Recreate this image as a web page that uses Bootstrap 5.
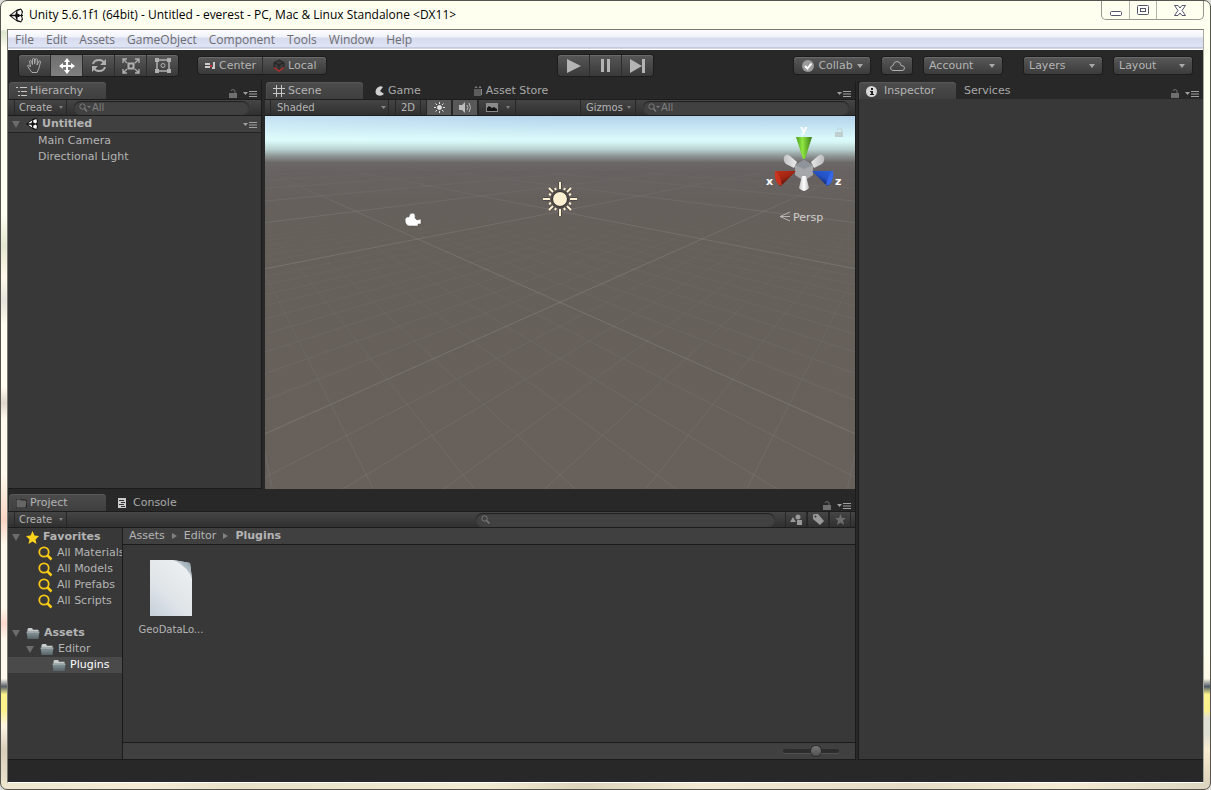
<!DOCTYPE html>
<html lang="en">
<head>
<meta charset="utf-8">
<meta name="viewport" content="width=device-width, initial-scale=1">
<title>Unity 5.6.1f1 (64bit) - Untitled - everest</title>
<link href="https://cdn.jsdelivr.net/npm/bootstrap@5.3.0/dist/css/bootstrap.min.css" rel="stylesheet">
<style>
  body { font: 11px/16px "DejaVu Sans", Verdana, sans-serif; color: #b4b4b4; background: #dcdcd8; }
  svg { display: block; flex: none; }
  button, input, select { font: inherit; color: inherit; }
  button { border: 0; background: none; padding: 0; }
  .shrinkable { min-width: 0; min-height: 0; }
  .frame {
    border: 1px solid #55554f; border-radius: 7px; padding: 0 6px 6px;
    background:
      linear-gradient(#fffff0, #fffff0) 0 0 / 100% 29px no-repeat,
      linear-gradient(90deg, #ede5cd, #f5ebd5 12%, #e9e0c8 20%, #f3ead2 40%, #ddd3bb 48%, #f3e9d2 58%, #e6dcc5 75%, #f5ebd3 88%, #ddd5c0) 0 100% / 100% 8px no-repeat,
      linear-gradient(#fffff0 0 3%, #dbe6cd 4%, #fffff0 6% 27%, #e4e8d0 31%, #fffaeb 35%, #e6e4dc 38%, #fffdee 41% 49%, #e0d7ca 51%, #fffaec 53% 60%, #fbd5c5 66%, #fffaec 69% 77%, #fdd9ce 79%, #fffaee 81% 86%, #565d68 87%, #fdf28c 88% 90%, #fff5e4 92%, #d8ceba 95%, #ede5d0) 0 0 / 7px 100% no-repeat,
      linear-gradient(#fffff0 0 82%, #fff8e6 86%, #4d5866 87%, #fdf28c 88% 90%, #dfdfd5 91% 93%, #f9ecd3 95%, #d9cfb7) 100% 0 / 8px 100% no-repeat,
      #fffff0;
  }
  .title-strip { height: 28px; color: #000; font: 12px/28px "Open Sans", sans-serif; padding-left: 2px; gap: 6px; }
  .title-strip h1 { font: inherit; }
  .win-buttons { height: 19px; border: 1px solid #96968e; border-top: 0; border-radius: 0 0 5px 5px; }
  .win-buttons button { display: grid; place-items: center; width: 27px; }
  .win-buttons button + button { border-left: 1px solid #b4b4aa; }
  .win-buttons button:last-child { width: 47px; }
  .client { border: 1px solid #77776f; border-right-color: #a9a9a0; border-bottom-color: #fff; background: #282828; }
  .menu-strip { height: 20px; background: linear-gradient(#fff, #f0f2fa 7px, #d6dbee 8px, #dfe4f5 17px, #a8b0c8 18px, #fff 19px); font: 12px/20px "Open Sans", sans-serif; padding-left: 7px; gap: 12px; }
  .menu-strip a { color: #6e6e72; text-decoration: none; }

  .top-tools { display: grid; grid-template-columns: 1fr auto 1fr; align-items: center; height: 31px; padding: 0 11px; }
  .seg { background: linear-gradient(#575757, #393939); border-radius: 3px; box-shadow: 0 0 0 1px #1c1c1c, inset 0 1px #6a6a6a; overflow: hidden; }
  .seg button { display: grid; place-items: center; box-sizing: content-box; width: 31px; height: 21px; }
  .seg button + button { border-left: 1px solid #2d2d2d; }
  .seg .on { background: linear-gradient(#6f6f6f, #808080); }
  .seg.slim { margin-left: 20px; }
  .seg.slim button { display: flex; align-items: center; box-sizing: border-box; width: 64px; height: 17px; gap: 3px; padding: 0 7px; }
  .seg.slim button + button { padding-left: 10px; }
  .drop { display: flex; align-items: center; justify-content: space-between; height: 17px; width: 78px; padding: 0 7px 0 5px; border-radius: 3px; background: linear-gradient(#585858, #3c3c3c); box-shadow: 0 0 0 1px #1c1c1c, inset 0 1px #6a6a6a; }
  .drops { gap: 12px; }
  .drop.collab { width: 76px; padding-left: 8px; }
  .drop.cloud { width: 30px; padding: 0; justify-content: center; }
  .drop.apart { margin-left: 10px; }
  .caret { width: 0; height: 0; border: 3px solid transparent; border-top: 4px solid #a8a8a8; border-bottom: 0; flex: none; }
  .caret.dim { border-top-color: #808080; border-width: 3px 2px 0; }

  .tab-row { height: 18px; display: flex; align-items: flex-end; padding-left: 1px; }
  .tab-row button { display: flex; align-items: center; height: 17px; gap: 3px; padding-top: 1px; color: #a8a8a8; }
  .tab-row button.active { width: 97px; padding-left: 7px; background: linear-gradient(#4c4c4c, #3f3f3f); border-radius: 4px 4px 0 0; box-shadow: inset 0 1px #595959, inset 1px 0 #4e4e4e; color: #b4b4b4; }
  .tab-row .after { margin-left: 12px; }
  .tab-row .after-wide { margin-left: 53px; }
  .pane-ctl { display: flex; align-items: center; gap: 6px; padding-right: 4px; height: 11px; }
  .bar { height: 17px; display: flex; align-items: stretch; background: linear-gradient(#454545, #303030); border-top: 1px solid #1d1d1d; border-bottom: 1px solid #1d1d1d; font-size: 10px; line-height: 15px; }
  .bar button, .bar select { border-left: 1px solid #272727; border-right: 1px solid #272727; }
  .bar .on { background: #585858; width: 26px; }
  .bar .flat { width: 26px; margin: 0 5px 0 6px; }
  .bar .sq { width: 22px; }
  .bar .fx { width: 38px; padding-left: 7px; gap: 8px; }
  .bar .giz { width: 56px; padding: 0 4px 0 5px; }
  .mk { display: flex; align-items: center; justify-content: space-between; width: 53px; margin-left: 6px; }
  .bar .mk { padding: 0 3px 0 4px; }
  .bar .shade { width: 119px; margin-left: 5px; padding: 0 6px; background: url("data:image/svg+xml,%3Csvg xmlns='http://www.w3.org/2000/svg' width='5' height='3'%3E%3Cpath d='M0 0h5L2.500 3z' fill='%23888'/%3E%3C/svg%3E") right 2px center no-repeat; appearance: none; border-width: 0 1px; border-radius: 0; outline: 0; }
  .find { display: flex; align-items: center; gap: 1px; height: 13px; margin: 1px 0; padding-left: 5px; border-radius: 7px; background: #414141; box-shadow: inset 0 1px 1px #202020, 0 1px #404040; }
  .find input { flex: 1; min-width: 0; height: 13px; padding: 0; border: 0; outline: 0; background: none; font-size: 10px; }
  .find input::placeholder { color: #7e7e7e; opacity: 1; }
  .find.in-hier { flex: 1; margin-left: 7px; margin-right: 12px; }
  .find.in-scene { width: 206px; margin-left: 7px; margin-right: 6px; }
  .find.in-project { width: 299px; margin-right: 10px; }
  .main { min-height: 480px; }
  .upper { flex: 1; min-height: 0; }
  .hier { width: 254px; border-right: 1px solid #1b1b1b; }
  .scene-col { margin-left: 3px; border-right: 1px solid #1b1b1b; }
  .insp { width: 345px; margin-left: 2px; border-left: 1px solid #1b1b1b; }
  .insp .tab-row { padding-left: 0; }
  .fill { background: #383838; border-bottom: 1px solid #1b1b1b; flex: 1; min-height: 0; }
  .scene-col .fill { border-bottom: 0; }
  .head-row { height: 17px; background: #404040; border-bottom: 1px solid #232323; }
  .rows { list-style: none; margin: 0; padding: 0; }
  .rows li { display: flex; align-items: center; height: 16px; white-space: nowrap; }
  .rows .lv1 { padding-left: 18px; }
  .rows .lv2 { padding-left: 30px; }
  .rows .lv3 { padding-left: 44px; }
  .lower { height: 271px; padding-top: 4px; border-right: 1px solid #1b1b1b; }
  .tri { width: 0; height: 0; border: 4px solid transparent; border-top: 7px solid #6c6c6c; border-bottom: 0; margin-right: 6px; flex: none; }
  .fill.tree { flex: none; width: 115px; padding-top: 1px; border-right: 1px solid #1b1b1b; overflow: hidden; }
  .tree .picked { background: #4a4a4a; color: #fff; }
  .crumbs { height: 17px; padding-left: 6px; gap: 7px; background: #404040; border-bottom: 1px solid #1b1b1b; }
  .crumbs a { color: inherit; text-decoration: none; }
  .next { width: 0; height: 0; border: 3px solid transparent; border-left: 5px solid #808080; border-right: 0; }
  .asset { width: 66px; margin: 15px 0 0 15px; text-align: center; font-size: 10px; line-height: 16px; }
  .foot { height: 17px; background: #404040; border-top: 1px solid #1b1b1b; padding-right: 16px; }
  .foot input { appearance: none; width: 56px; height: 10px; background: none; margin: 0; }
  .foot input::-webkit-slider-runnable-track { height: 4px; background: #2c2c2c; border-radius: 2px; box-shadow: 0 1px #505050; }
  .foot input::-webkit-slider-thumb { appearance: none; width: 10px; height: 10px; margin-top: -3px; border-radius: 50%; background: linear-gradient(#777, #505050); box-shadow: 0 0 0 1px #2c2c2c; }
  .status { height: 22px; }
</style>
</head>
<body>
<svg width="0" height="0" class="position-absolute">
  <defs>
    <symbol id="unity" viewBox="0 0 14 14"><path d="M0 7 8 1 12 0 14 3 13 7 14 11 12 14 8 13Z" fill="#111"/><path d="M2.500 6.200 7.500 2.500 6.200 6.200ZM2.500 7.800H6.200L7.500 11.500ZM8.500 2.500 12 1.300 12.800 4.500 11.300 7 8.500 5.500ZM8.500 11.500V8.500L11.300 7 12.800 9.500 12 12.700Z" fill="#fff"/><path d="M8.500 5.500 11.300 7 8.500 8.500M11.300 7H14" stroke="#111" fill="none"/></symbol>
    <symbol id="lock" viewBox="0 0 8 9"><path d="M0 4h8v5H0z" fill="#6f6f6f"/><path d="M2 2V1.500Q4-.5 6 1.500V4" fill="none" stroke="#6f6f6f"/></symbol>
    <symbol id="opts" viewBox="0 0 14 7"><path d="M0 2h5L2.500 5z" fill="#a0a0a0"/><path d="M6 1.500h8M6 4h8M6 6.500h8" stroke="#a0a0a0"/></symbol>
    <symbol id="lens" viewBox="0 0 11 9"><circle cx="3.500" cy="3.500" r="2.700" fill="none" stroke="#7a7a7a"/><path d="m5.500 5.500 3 3" stroke="#7a7a7a" stroke-width="1.500"/></symbol>
    <symbol id="lensdd" viewBox="0 0 12 9"><circle cx="3.500" cy="3.500" r="2.700" fill="none" stroke="#7a7a7a"/><path d="m5.500 5.500 2.500 3" stroke="#7a7a7a" stroke-width="1.500"/><path d="M8 3h4l-2 2z" fill="#7a7a7a"/></symbol>
    <symbol id="glass" viewBox="0 0 15 15"><circle cx="6" cy="6" r="4.700" fill="none" stroke="#f8c818" stroke-width="1.800"/><path d="m9.500 9.500 4 4" stroke="#ffcf16" stroke-width="2.500"/></symbol>
    <linearGradient id="fg" x2="0" y2="1"><stop stop-color="#8d9a9d"/><stop offset="1" stop-color="#566467"/></linearGradient>
    <symbol id="dir" viewBox="0 0 14 12"><path d="M1 3V1l1-1h4l1 2h6v2H1z" fill="#c6cbcc"/><path d="M0 4h14l-1 8H1z" fill="url(#fg)"/><path d="M0 4.500h14" stroke="#a8b4b6"/></symbol>
  </defs>
</svg>

<div class="frame d-flex flex-column min-vh-100">
  <header class="title-strip d-flex align-items-center">
    <svg width="14" height="15"><use href="#unity"/></svg>
    <h1 class="m-0 flex-grow-1 text-nowrap">Unity 5.6.1f1 (64bit) - Untitled - everest - PC, Mac &amp; Linux Standalone &lt;DX11&gt;</h1>
    <div class="win-buttons d-flex align-self-start">
      <button aria-label="Minimize"><svg width="12" height="14"><rect x=".5" y="8.500" width="11" height="4" rx="1" fill="#fff" stroke="#55556a"/></svg></button>
      <button aria-label="Maximize"><svg width="12" height="10"><rect x=".5" y=".5" width="11" height="9" rx="1" fill="#fff" stroke="#55556a" /><rect x="3.500" y="3.500" width="5" height="3" fill="#fff" stroke="#55556a"/></svg></button>
      <button aria-label="Close"><svg width="12" height="11"><path d="M.5.5h3.500l2 2.500 2-2.500h3.500L8 5.500l3.500 5H8L6 8l-2 2.500H.5l3.500-5z" fill="#fff" stroke="#55556a"/></svg></button>
    </div>
  </header>

  <div class="client flex-grow-1 d-flex flex-column">
    <nav class="menu-strip d-flex">
      <a href="#">File</a><a href="#">Edit</a><a href="#">Assets</a><a href="#">GameObject</a><a href="#">Component</a><a href="#">Tools</a><a href="#">Window</a><a href="#">Help</a>
    </nav>

    <div class="top-tools">
      <div class="d-flex align-items-center">
        <div class="seg d-flex">
          <button aria-label="Hand"><svg width="18" height="17" fill="none" stroke="#aaa"><path d="M6 15.500Q3 12 1.500 8.500q1-1.500 3 1.500L3.500 4q1.500-1.500 2 .5l1 3V2q1.500-1.500 2 0v5l1-5q1.500-1 2 .5L11 8l2-4q1.500-.5 1.500 1L13 11l-2 4.500z"/></svg></button>
          <button class="on" aria-label="Move"><svg width="16" height="16" fill="#fff"><path d="M8 0l3 4H9v3h3V5l4 3-4 3V9H9v3h2l-3 4-3-4h2V9H4v2L0 8l4-3v2h3V4H5z"/></svg></button>
          <button aria-label="Rotate"><svg width="16" height="15" fill="none" stroke="#b0b0b0" stroke-width="2"><path d="M2 6Q3 2 8 2q4 0 5 3M14 9q-1 4-6 4-4 0-5-3"/><path d="M15 1v6H9zM1 14V8h6z" fill="#b0b0b0" stroke="none"/></svg></button>
          <button aria-label="Scale"><svg width="18" height="16" fill="none" stroke="#b0b0b0"><path d="M6.500 5.500h5v5h-5z" stroke-width="2"/><path d="m1 1 4 4M17 1l-4 4M1 15l4-4M17 15l-4-4M1 5V1h4M13 1h4v4M1 11v4h4M13 15h4v-4" stroke-width="1.300"/></svg></button>
          <button aria-label="Rect"><svg width="18" height="17" fill="none" stroke="#b0b0b0"><path d="M3 3h12v11H3z" stroke-width="1.500"/><circle cx="9" cy="8.500" r="2"/><path d="M1 1h4v4H1zM13 1h4v4h-4zM1 12h4v4H1zM13 12h4v4h-4z" fill="#b0b0b0" stroke="none"/></svg></button>
        </div>
        <div class="seg slim d-flex">
          <button><svg width="11" height="8"><path d="M0 1h5v2H0zM0 4h5v2H0zM8 0h2v7H7V5h1z" fill="#ccc"/><path d="M5 3h2v2H5z" fill="#d33"/></svg>Center</button>
          <button><svg width="12" height="13" fill="none"><path d="M6 1 1 3.500v5L6 12l5-3.500v-5zM1 3.500 6 6l5-2.500M6 6v6" fill="#3a3a3a" stroke="#222"/><path d="m1 8.500 5 3.500 5-3.500" stroke="#b03030" stroke-width="1.500"/></svg>Local</button>
        </div>
      </div>
      <div class="seg d-flex">
        <button aria-label="Play"><svg width="14" height="14"><path d="M0 0v14l14-7z" fill="#b4b4b4"/></svg></button>
        <button aria-label="Pause"><svg width="9" height="13"><path d="M0 0h3v13H0zM6 0h3v13H6z" fill="#b4b4b4"/></svg></button>
        <button aria-label="Step"><svg width="15" height="14"><path d="M0 0v14l12-7zM12 0h3v14h-3z" fill="#b4b4b4"/></svg></button>
      </div>
      <div class="drops d-flex justify-content-end">
        <button class="drop collab"><svg width="12" height="12"><circle cx="6" cy="6" r="6" fill="#9c9c9c"/><path d="m3 6 2.500 2.500L9.500 3.500" fill="none" stroke="#fff" stroke-width="2"/></svg>Collab<span class="caret"></span></button>
        <button class="drop cloud" aria-label="Cloud"><svg width="15" height="10" fill="none" stroke="#b0b0b0"><path d="M3 9.500Q.5 9 .5 7T3 4.500Q3.500.5 7 .5t4 4q3.500 0 3.500 2.500T12 9.500z"/></svg></button>
        <button class="drop">Account<span class="caret"></span></button>
        <button class="drop apart">Layers<span class="caret"></span></button>
        <button class="drop">Layout<span class="caret"></span></button>
      </div>
    </div>

    <main class="main d-flex flex-grow-1">
      <div class="shrinkable d-flex flex-column flex-grow-1">
        <div class="upper d-flex">
          <section class="hier d-flex flex-column flex-shrink-0">
            <div class="tab-row">
              <button class="active"><svg width="11" height="10" stroke="#c8c8c8"><path d="M0 1.500h2M4 1.500h7M2 5.500h2M5 5.500h6M2 9.500h2M5 9.500h6"/></svg>Hierarchy</button>
              <div class="pane-ctl ms-auto"><svg width="8" height="9"><use href="#lock"/></svg><svg width="14" height="7"><use href="#opts"/></svg></div>
            </div>
            <div class="bar">
              <button class="mk">Create<span class="caret dim"></span></button>
              <label class="find in-hier"><svg width="12" height="9"><use href="#lensdd"/></svg><input placeholder="All" aria-label="Search hierarchy"></label>
            </div>
            <div class="fill">
              <div class="head-row d-flex align-items-center ps-1 pe-1"><span class="tri"></span><svg width="12" height="12"><use href="#unity"/></svg><b class="ms-1">Untitled</b><svg width="14" height="7" class="ms-auto"><use href="#opts"/></svg></div>
              <ul class="rows"><li class="lv2">Main Camera</li><li class="lv2">Directional Light</li></ul>
            </div>
          </section>

          <section class="scene-col shrinkable d-flex flex-column flex-grow-1">
            <div class="tab-row">
              <button class="active"><svg width="12" height="12" stroke="#c8c8c8"><path d="M3.500 0v12M8.500 0v12M0 3.500h12M0 8.500h12"/></svg>Scene</button>
              <button class="after"><svg width="10" height="10"><path d="M8 1Q5-1 2 2-1 6 2 9q4 2 7-1L5 5z" fill="#d0d0d0"/></svg>Game</button>
              <button class="after-wide"><svg width="9" height="10"><path d="M0 3h7v7H0z" fill="#5c5c5c"/><path d="M7.500 3v6M1 2q1-3 2 0M5 2q1-3 2 0" stroke="#888" fill="none"/></svg>Asset Store</button>
              <div class="pane-ctl ms-auto"><svg width="14" height="7"><use href="#opts"/></svg></div>
            </div>
            <div class="bar">
              <select class="shade" aria-label="Draw mode"><option>Shaded</option></select>
              <button class="flat">2D</button>
              <button class="on" aria-label="Lighting"><svg class="mx-auto" width="11" height="11" stroke="#e0e0e0"><circle cx="5.500" cy="5.500" r="2" fill="#e0e0e0"/><path d="M5.500 0v2M5.500 9v2M0 5.500h2M9 5.500h2M1.500 1.500l1.500 1.500M8 8l1.500 1.500M1.500 9.500 3 8M8 3l1.500-1.500"/></svg></button>
              <button class="on" aria-label="Audio"><svg class="mx-auto" width="13" height="11"><path d="M0 3h3l3-3v11L3 8H0z" fill="#bbb"/><path d="M8 3q2 2.500 0 5M10 1q3 4.500 0 9" fill="none" stroke="#bbb"/></svg></button>
              <button class="fx d-flex align-items-center" aria-label="Effects"><svg width="12" height="9"><path d="M0 0h12v9H0z" fill="#8a8a8a"/><path d="M1 8V5l2-2 3 2 2-1 3 2v2z" fill="#151515"/></svg><span class="caret dim"></span></button>
              <button class="giz d-flex align-items-center justify-content-between ms-auto">Gizmos<span class="caret dim"></span></button>
              <label class="find in-scene"><svg width="12" height="9"><use href="#lensdd"/></svg><input placeholder="All" aria-label="Search scene"></label>
            </div>
            <div class="fill overflow-hidden position-relative">
              <svg width="100%" height="100%" viewBox="0 0 590 373" preserveAspectRatio="xMidYMid slice" role="img" aria-label="Scene view" class="position-absolute">
                <defs>
                  <linearGradient id="sky" x2="0" y2="1"><stop stop-color="#b4d3ec"/><stop offset=".035" stop-color="#c8e8f4"/><stop offset=".062" stop-color="#dbfafb"/><stop offset=".07" stop-color="#d6f6f5"/><stop offset=".09" stop-color="#b8d0cf"/><stop offset=".107" stop-color="#8d9796"/><stop offset=".125" stop-color="#6c6867"/><stop offset=".15" stop-color="#676160"/><stop offset=".3" stop-color="#66605b"/><stop offset="1" stop-color="#67605b"/></linearGradient>
                  <linearGradient id="glow"><stop stop-color="#e8ffff" stop-opacity=".3"/><stop offset=".5" stop-color="#e0ffff" stop-opacity="0"/></linearGradient>
                  <linearGradient id="far" gradientUnits="userSpaceOnUse" x1="0" x2="0" y1="45" y2="150"><stop stop-color="#000"/><stop offset=".5" stop-color="#aaa"/><stop offset="1" stop-color="#fff"/></linearGradient>
                  <linearGradient id="near" gradientUnits="userSpaceOnUse" x1="0" x2="0" y1="80" y2="330"><stop stop-color="#000"/><stop offset=".3" stop-color="#666"/><stop offset="1" stop-color="#fff"/></linearGradient>
                  <mask id="mFar" maskUnits="userSpaceOnUse" x="-400" y="0" width="1400" height="373"><path d="M-400 0H1000V373H-400z" fill="url(#far)"/></mask>
                  <mask id="mNear" maskUnits="userSpaceOnUse" x="-400" y="0" width="1400" height="373"><path d="M-400 0H1000V373H-400z" fill="url(#near)"/></mask>
                  <linearGradient id="cy"><stop stop-color="#4c9a20"/><stop offset=".4" stop-color="#8ee840"/><stop offset="1" stop-color="#3e7a1a"/></linearGradient>
                  <linearGradient id="cw"><stop stop-color="#c4c4c6"/><stop offset=".5" stop-color="#fff"/><stop offset="1" stop-color="#bcbcbe"/></linearGradient>
                  <linearGradient id="cr" x2=".7" y2="1"><stop stop-color="#c03018"/><stop offset=".5" stop-color="#a02412"/><stop offset="1" stop-color="#2a0a04"/></linearGradient>
                  <linearGradient id="cb" x1="1" x2=".3" y2="1"><stop stop-color="#2a60e0"/><stop offset=".5" stop-color="#2450c0"/><stop offset="1" stop-color="#081440"/></linearGradient>
                </defs>
                <path d="M-400 0H1000V373H-400z" fill="url(#sky)"/>
                <path d="M0 0H590V25H0z" fill="url(#glow)"/>
                <g id="minor" mask="url(#mNear)" stroke="#8b8f8e" stroke-opacity=".26"></g>
                <g id="major" mask="url(#mFar)" stroke="#989c9a" stroke-opacity=".34"></g>
                <path d="M140 103q2-3 4-2 0-4 4-4 3 1 2 5l2 2 4-1v5h-3v2h-9q-4-1-4-7z" fill="#fff" stroke="#504c48" stroke-opacity=".5"/>
                <g transform="translate(295 83)" stroke="#3c3834" stroke-opacity=".55" stroke-width="4"><circle r="7.500"/><path d="M0-17V-10M0 17V10M-17 0H-10M17 0H10M-10-10-7-7M10 10 7 7M10-10 7-7M-10 10-7 7"/></g>
                <g transform="translate(295 83)" stroke="#fdf0d2" stroke-width="2"><circle r="6" fill="#fdf0d2"/><path d="M0-17V-10M0 17V10M-17 0H-10M17 0H10M-11-11-7-7M11 11 7 7M11-11 7-7M-11 11-7 7M-5-11-4-9M5-11 4-9M-5 11-4 9M5 11 4 9M-11-5-9-4M-11 5-9 4M11-5 9-4M11 5 9 4"/></g>
                <g>
                  <path d="M519 41q2-4 6-1l7 6-3 6-8-4q-3-3-2-7zM559 41q-2-4-6-1l-7 6 3 6 8-4q3-3 2-7z" fill="url(#cw)"/>
                  <path d="M530 49l9-5 9 5v10l-9 6-9-6z" fill="#a5a6aa"/><path d="M530 49l9-5 9 5-9 4z" fill="#8f939a"/>
                  <path d="M537 60h4l3 12q-5 6-10 0z" fill="url(#cw)"/>
                  <path d="M531 21h16l-7 22h-2z" fill="url(#cy)"/>
                  <path d="M510 55l21 0-15 15q-5-1-6-15z" fill="url(#cr)"/><path d="M510 55q4 1 7 14-4 1-6-4-2-5-1-10z" fill="#c83420"/>
                  <path d="M568 55l-21 0 15 15q5-1 6-15z" fill="url(#cb)"/><path d="M568 55q-4 1-7 14 4 1 6-4 2-5 1-10z" fill="#3468e8"/>
                  <g fill="#fff" font-size="11" font-weight="700"><text x="535" y="17">y</text><text x="501" y="69">x</text><text x="570" y="69">z</text></g>
                  <path d="M570 16h8v5h-8z" fill="#bfcfce"/><path d="M572 14q3-4 5 0v3" fill="none" stroke="#bfcfce"/>
                  <path d="M525 96l-10 4.500 10 4.500M515 100.500h10" fill="none" stroke="#b8b6b4"/>
                  <text x="528" y="105" font-size="11" fill="#d0cecc">Persp</text>
                </g>
              </svg>
            </div>
          </section>
        </div>

        <section class="lower d-flex flex-column">
          <div class="tab-row">
            <button class="active"><svg width="11" height="9"><path d="M0 2V0h5v1h5v1l1 1-1 6H0z" fill="#666" stroke="#222"/></svg>Project</button>
            <button class="after"><svg width="8" height="10"><path d="M0 0h8v10H0z" fill="#ccc"/><path d="M1 2.500h5M3 4.500h4M1 6.500h5M3 8.500h4" stroke="#333"/></svg><span class="ps-1">Console</span></button>
            <div class="pane-ctl ms-auto"><svg width="8" height="9"><use href="#lock"/></svg><svg width="14" height="7"><use href="#opts"/></svg></div>
          </div>
          <div class="bar">
            <button class="mk">Create<span class="caret dim"></span></button>
            <label class="find in-project ms-auto"><svg width="11" height="9"><use href="#lens"/></svg><input aria-label="Search project"></label>
            <button class="sq" aria-label="Filter by type"><svg class="mx-auto" width="12" height="11" fill="#999"><path d="M0 8l3-5 3 5zM7 6h5v5H7z"/><circle cx="8" cy="3" r="2.500"/></svg></button>
            <button class="sq" aria-label="Filter by label"><svg class="mx-auto" width="11" height="11"><path d="M0 1 1 0h4l6 7-4 4-7-6z" fill="#999"/><circle cx="2.500" cy="2.500" r="1" fill="#333"/></svg></button>
            <button class="sq me-1" aria-label="Save search"><svg class="mx-auto" width="11" height="11"><path d="m5.500 0 1.500 4h4L8 6.500 9 11 5.500 8.500 2 11l1-4.500L0 4h4z" fill="#6c6c6c"/></svg></button>
          </div>
          <div class="shrinkable d-flex flex-grow-1">
            <div class="tree fill">
              <ul class="rows">
                <li class="ps-1"><span class="tri"></span><svg width="13" height="13"><path d="m6.500 0 2 4.500 4.500.5-3.500 3.500 1 4.500-4-2.500-4 2.500 1-4.500L0 5l4.500-.5z" fill="#ffd21c"/></svg><b class="ms-1">Favorites</b></li>
                <li class="lv2"><svg width="15" height="15" class="me-1"><use href="#glass"/></svg>All Materials</li>
                <li class="lv2"><svg width="15" height="15" class="me-1"><use href="#glass"/></svg>All Models</li>
                <li class="lv2"><svg width="15" height="15" class="me-1"><use href="#glass"/></svg>All Prefabs</li>
                <li class="lv2"><svg width="15" height="15" class="me-1"><use href="#glass"/></svg>All Scripts</li>
              </ul>
              <ul class="rows mt-3">
                <li class="ps-1"><span class="tri"></span><svg width="14" height="11"><use href="#dir"/></svg><b class="ms-1">Assets</b></li>
                <li class="lv1"><span class="tri"></span><svg width="14" height="11"><use href="#dir"/></svg><span class="ms-1">Editor</span></li>
                <li class="lv3 picked"><svg width="14" height="11"><use href="#dir"/></svg><span class="ms-1">Plugins</span></li>
              </ul>
            </div>
            <div class="fill d-flex flex-column">
              <nav class="crumbs d-flex align-items-center"><a href="#">Assets</a><span class="next"></span><a href="#">Editor</a><span class="next"></span><b>Plugins</b></nav>
              <div class="flex-grow-1">
                <figure class="asset"><svg class="mx-auto" width="44" height="58"><defs><linearGradient id="pg" x1=".8" x2=".1" y1="0" y2="1"><stop stop-color="#eef0f1"/><stop offset=".6" stop-color="#dfe4e8"/><stop offset="1" stop-color="#c8d2dc"/></linearGradient><linearGradient id="fold" x1="1" x2=".3" y1="0" y2=".7"><stop stop-color="#7f93a0"/><stop offset="1" stop-color="#dfe5e8"/></linearGradient></defs><path d="M1 0h23l17 3 2 16v37H1z" fill="url(#pg)"/><path d="M25 0l16 3 2 16q-3-11-18-19z" fill="url(#fold)"/></svg><figcaption class="pt-1">GeoDataLo...</figcaption></figure>
              </div>
              <div class="foot d-flex align-items-center justify-content-end"><input type="range" min="0" max="100" value="60" aria-label="Icon size"></div>
            </div>
          </div>
        </section>
      </div>

      <aside class="insp d-flex flex-column flex-shrink-0">
        <div class="tab-row">
          <button class="active"><svg width="11" height="11" class="me-1"><circle cx="5.500" cy="5.500" r="5.500" fill="#d8d8d8"/><path d="M5 2h2v2H5zM4 5h3v3h1v1H4V8h1V6H4z" fill="#222"/></svg>Inspector</button>
          <button class="ms-2">Services</button>
          <div class="pane-ctl ms-auto"><svg width="8" height="9"><use href="#lock"/></svg><svg width="14" height="7"><use href="#opts"/></svg></div>
        </div>
        <div class="fill"></div>
      </aside>
    </main>
    <footer class="status"></footer>
  </div>
</div>
<script src="https://cdn.jsdelivr.net/npm/bootstrap@5.3.0/dist/js/bootstrap.bundle.min.js"></script>
<script>
  // Floor grid: two families of lines meeting at vanishing points on the horizon.
  const cx = 295, horizon = 25, reach = 362, origin = 2.244, step = 0.29;
  const groups = { minor: '', major: '' };
  for (let n = -7; n <= 100; n++) {
    const major = n % 10 === 0;
    if (!major && n > 32) continue;
    const a = origin + step * n, far = a * 400;
    for (const side of [-1, 1]) {
      groups[major ? 'major' : 'minor'] +=
        `<path d="M${cx + side * reach} ${horizon}L${(cx + side * (reach - far)).toFixed(1)} ${horizon + 400}"/>`;
    }
  }
  for (const id in groups) document.getElementById(id).innerHTML = groups[id];
</script>
</body>
</html>
